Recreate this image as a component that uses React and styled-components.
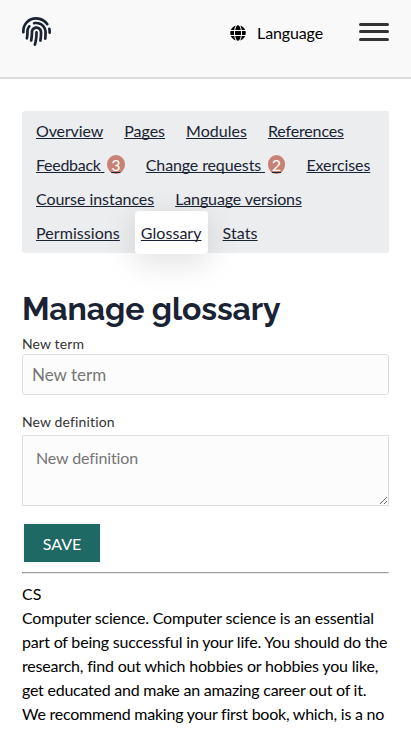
import React from "react";
import styled, { createGlobalStyle } from "styled-components";
import { FaFingerprint, FaGlobe } from "react-icons/fa";

const GlobalStyle = createGlobalStyle`
  * { box-sizing: border-box; }
  html, body { margin: 0; height: 100%; overflow: hidden; }
  body {
    background: #fff;
    color: #000;
    font-family: Lato, sans-serif;
    font-size: 16px;
    line-height: 24px;
  }
`;

const Header = styled.header`
  display: flex;
  align-items: flex-start;
  height: 79px;
  padding: 0 22px;
  background: #f9f9f9;
  border-bottom: 2px solid #dcdcdc;
`;

const HomeLink = styled.a`
  display: flex;
  margin: 17px auto 0 0;
  color: #1a2333;
  svg { width: 29px; height: 29px; }
`;

const LanguageButton = styled.button`
  display: flex;
  align-items: center;
  gap: 11px;
  margin: 21px 36px 0 0;
  padding: 0;
  border: 0;
  background: none;
  color: #000;
  font: inherit;
  letter-spacing: -0.12px;
  svg { width: 16px; height: 16px; }
`;

const MenuButton = styled.button`
  display: flex;
  flex-direction: column;
  width: 30px;
  margin-top: 23px;
  padding: 0;
  border: 0;
  background: none;
`;

const MenuBar = styled.span`
  width: 30px;
  height: 3px;
  margin-bottom: ${(p) => p.$gap || 0}px;
  border-radius: 2px;
  background: #333;
`;

const Page = styled.main`
  padding: 32px 22px 0;
`;

const Tabs = styled.nav`
  display: flex;
  flex-wrap: wrap;
  column-gap: 9px;
  padding: 3px 8px;
  border-radius: 3px;
  background: #ebedee;
`;

const Tab = styled.a`
  height: 43px;
  margin: -5px 0 -4px;
  padding: 10px 6px 9px;
  border-radius: 4px;
  color: #1a2333;
  letter-spacing: ${(p) => p.$tracking || 0}px;
  font-variant-ligatures: none;
  white-space: pre;
  text-decoration: underline;
  text-decoration-skip-ink: none;
  background: ${(p) => (p.$active ? "#fff" : "transparent")};
  box-shadow: ${(p) => (p.$active ? "0 8px 32px rgba(0, 0, 0, 0.13)" : "none")};
`;

const Count = styled.span`
  margin-left: 2.5px;
  padding: 0 4.3px;
  border-radius: 50%;
  background: #c68275;
  color: #fff;
  letter-spacing: 0;
`;

const Title = styled.h1`
  margin: 35px 0 0;
  color: #1a2333;
  font-family: Raleway, Lato, sans-serif;
  font-size: 32px;
  font-weight: 700;
  letter-spacing: -0.13px;
  line-height: 42px;
`;

const Label = styled.label`
  display: block;
  margin-top: ${(p) => p.$top}px;
  color: #333;
  font-size: 14px;
  letter-spacing: 0.13px;
  line-height: 20px;
`;

const Input = styled.input`
  display: block;
  width: 100%;
  height: 41px;
  margin-top: 0;
  padding: 0 9px;
  border: 1px solid #dedede;
  border-radius: 3px;
  background: #fcfcfc;
  font: 17px Lato, sans-serif;
`;

const TextArea = styled.textarea`
  display: block;
  width: 100%;
  height: 71px;
  margin-top: 3px;
  padding: 10px 13px;
  border: 1px solid #dedede;
  background: #fcfcfc;
  font: 16px/24px Lato, sans-serif;
  letter-spacing: -0.13px;
  resize: vertical;
`;

const SaveButton = styled.button`
  display: block;
  width: 80px;
  height: 42px;
  margin-top: 16px;
  padding: 1px 0 0;
  border: 2px solid #f7f8f9;
  background: #1f6964;
  color: #fff;
  font: 16px Lato, sans-serif;
  text-transform: uppercase;
`;

const Divider = styled.hr`
  margin: 8px 0;
`;

const Entry = styled.div`
  letter-spacing: ${(p) => p.$tracking || 0}px;
  white-space: nowrap;
`;

const TABS = [
  { name: "Overview", tracking: -0.12 },
  { name: "Pages" },
  { name: "Modules", tracking: 0.02 },
  { name: "References", tracking: -0.15 },
  { name: "Feedback", count: 3, tracking: -0.29 },
  { name: "Change requests", count: 2, tracking: -0.12 },
  { name: "Exercises", tracking: -0.08 },
  { name: "Course instances", tracking: -0.05 },
  { name: "Language versions", tracking: -0.12 },
  { name: "Permissions", tracking: 0.07 },
  { name: "Glossary", active: true, tracking: 0.04 },
  { name: "Stats", tracking: 0.1 },
];

const DEFINITION = [
  { text: "Computer science. Computer science is an essential", tracking: -0.18 },
  { text: "part of being successful in your life. You should do the", tracking: -0.19 },
  { text: "research, find out which hobbies or hobbies you like,", tracking: -0.19 },
  { text: "get educated and make an amazing career out of it.", tracking: -0.24 },
  { text: "We recommend making your first book, which, is a no", tracking: -0.24 },
];

export default function App() {
  return (
    <>
      <GlobalStyle />
      <Header>
        <HomeLink aria-label="Home"><FaFingerprint /></HomeLink>
        <LanguageButton><FaGlobe />Language</LanguageButton>
        <MenuButton aria-label="Open menu">
          <MenuBar $gap={4} />
          <MenuBar $gap={5} />
          <MenuBar />
        </MenuButton>
      </Header>
      <Page>
        <Tabs>
          {TABS.map((t) => (
            <Tab key={t.name} $active={t.active} $tracking={t.tracking}>
              {t.name}
              {t.count && <>{" "}<Count>{t.count}</Count></>}
            </Tab>
          ))}
        </Tabs>
        <Title>Manage glossary</Title>
        <Label $top={4} htmlFor="term">New term</Label>
        <Input id="term" placeholder="New term" />
        <Label $top={17} htmlFor="definition">New definition</Label>
        <TextArea id="definition" placeholder="New definition" />
        <SaveButton>Save</SaveButton>
        <Divider />
        <Entry>CS</Entry>
        {DEFINITION.map((line) => (
          <Entry key={line.text} $tracking={line.tracking}>{line.text}</Entry>
        ))}
      </Page>
    </>
  );
}
